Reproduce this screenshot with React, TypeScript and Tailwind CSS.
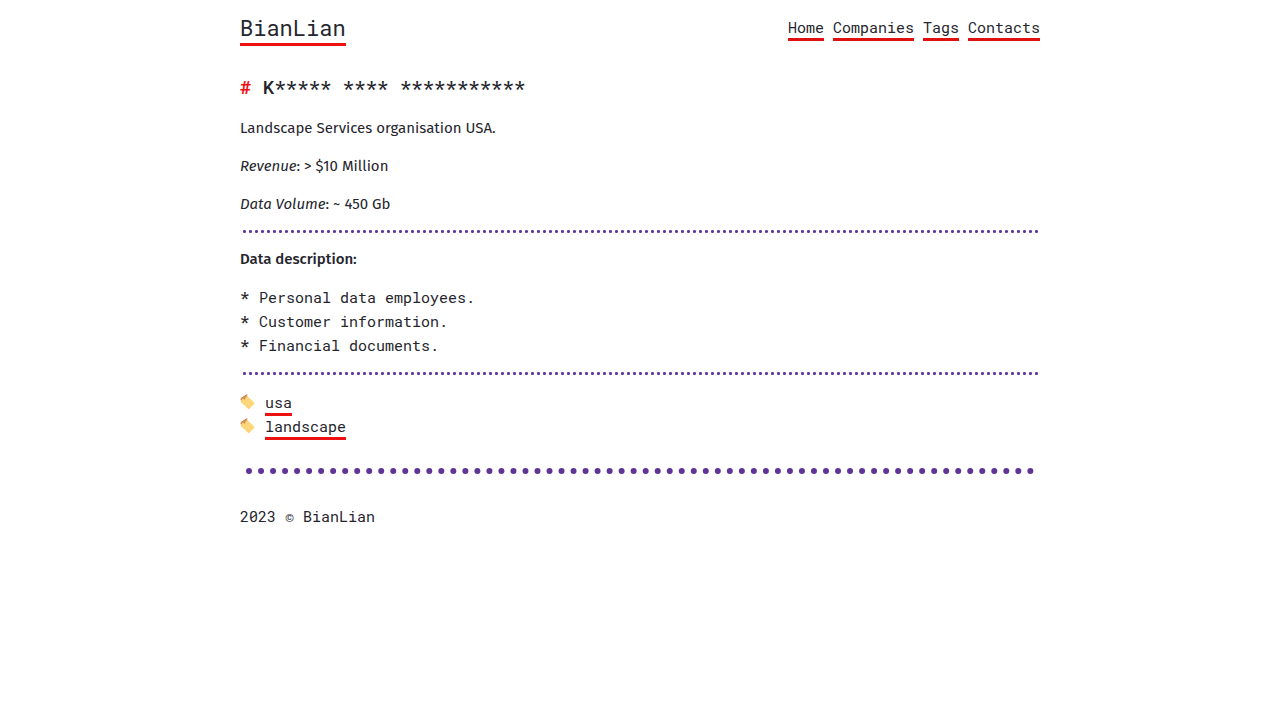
import React from 'react';

const navLinks = ['Home', 'Companies', 'Tags', 'Contacts'];

const dataItems = ['Personal data employees.', 'Customer information.', 'Financial documents.'];

const tags = ['usa', 'landscape'];

function TagIcon() {
  return (
    <svg className="w-4 h-4 shrink-0" viewBox="0 0 16 16" aria-hidden="true">
      <path d="M0.8 3.6 6.8 1.4 14.8 9.2 8.8 15.4 1 8.3Z" fill="#fcd77a" />
      <path d="M0.8 3.6 6.8 1.4 7.4 2.2 2 5.2 1 8.3Z" fill="#f5c267" />
      <circle cx="4.2" cy="4.6" r="1.1" fill="#d39a62" />
      <path d="M1 5.6C2.4 3.2 4.6 1.8 7 0.9M4.2 4.6 6.2 2" fill="none" stroke="#bd6f50" strokeWidth="1" strokeLinecap="round" />
    </svg>
  );
}

// thin separator, one round dot every 6px
function DottedRule() {
  return (
    <hr className="mx-px my-[15px] h-[3px] border-0 bg-size-[6px_3px] bg-[radial-gradient(circle_closest-side_at_58%_50%,#5f3a9e_85%,transparent_115%)]" />
  );
}

function Header() {
  return (
    <header className="flex items-center justify-between h-14">
      <a href="#" className="mt-px text-[22px] leading-7 pb-px border-b-3 border-[#ee1111]">
        BianLian
      </a>
      <nav className="flex gap-[9px]">
        {navLinks.map((link) => (
          <a key={link} href="#" className="leading-5 pb-px border-b-3 border-[#e01010]">
            {link}
          </a>
        ))}
      </nav>
    </header>
  );
}

export default function App() {
  return (
    <div className="max-w-[800px] mx-auto pt-px text-[15px] text-[#25252d] font-['Roboto_Mono','Liberation_Mono',monospace]">
      <Header />
      <main>
        <h1 className="mt-[18px] mb-[18px] text-[19px] leading-6 font-medium">
          <span className="font-bold text-[#ee1111]">#</span> K***** **** ***********
        </h1>
        <div className="flex flex-col gap-4 leading-[22px] font-['Fira_Sans','Noto_Sans',sans-serif]">
          <p>Landscape Services organisation USA.</p>
          <p>
            <em>Revenue</em>: &gt; $10 Million
          </p>
          <p>
            <em>Data Volume</em>: ~ 450 Gb
          </p>
        </div>
        <DottedRule />
        <p className="leading-[22px] font-medium font-['Fira_Sans','Noto_Sans',sans-serif]">Data description:</p>
        <ul className="mt-[15px] leading-6">
          {dataItems.map((item) => (
            <li key={item} className="flex gap-[10px]">
              <span className="font-bold">*</span>
              {item}
            </li>
          ))}
        </ul>
        <DottedRule />
        <ul>
          {tags.map((tag) => (
            <li key={tag} className="flex items-center gap-[9px] h-6">
              <TagIcon />
              <a href="#" className="mt-1 leading-5 pb-px border-b-3 border-[#ee1111]">
                {tag}
              </a>
            </li>
          ))}
        </ul>
      </main>
      <hr className="mx-[6px] my-[30px] border-t-6 border-dotted border-[#5f3496]" />
      <footer className="leading-6">2023 © BianLian</footer>
    </div>
  );
}
